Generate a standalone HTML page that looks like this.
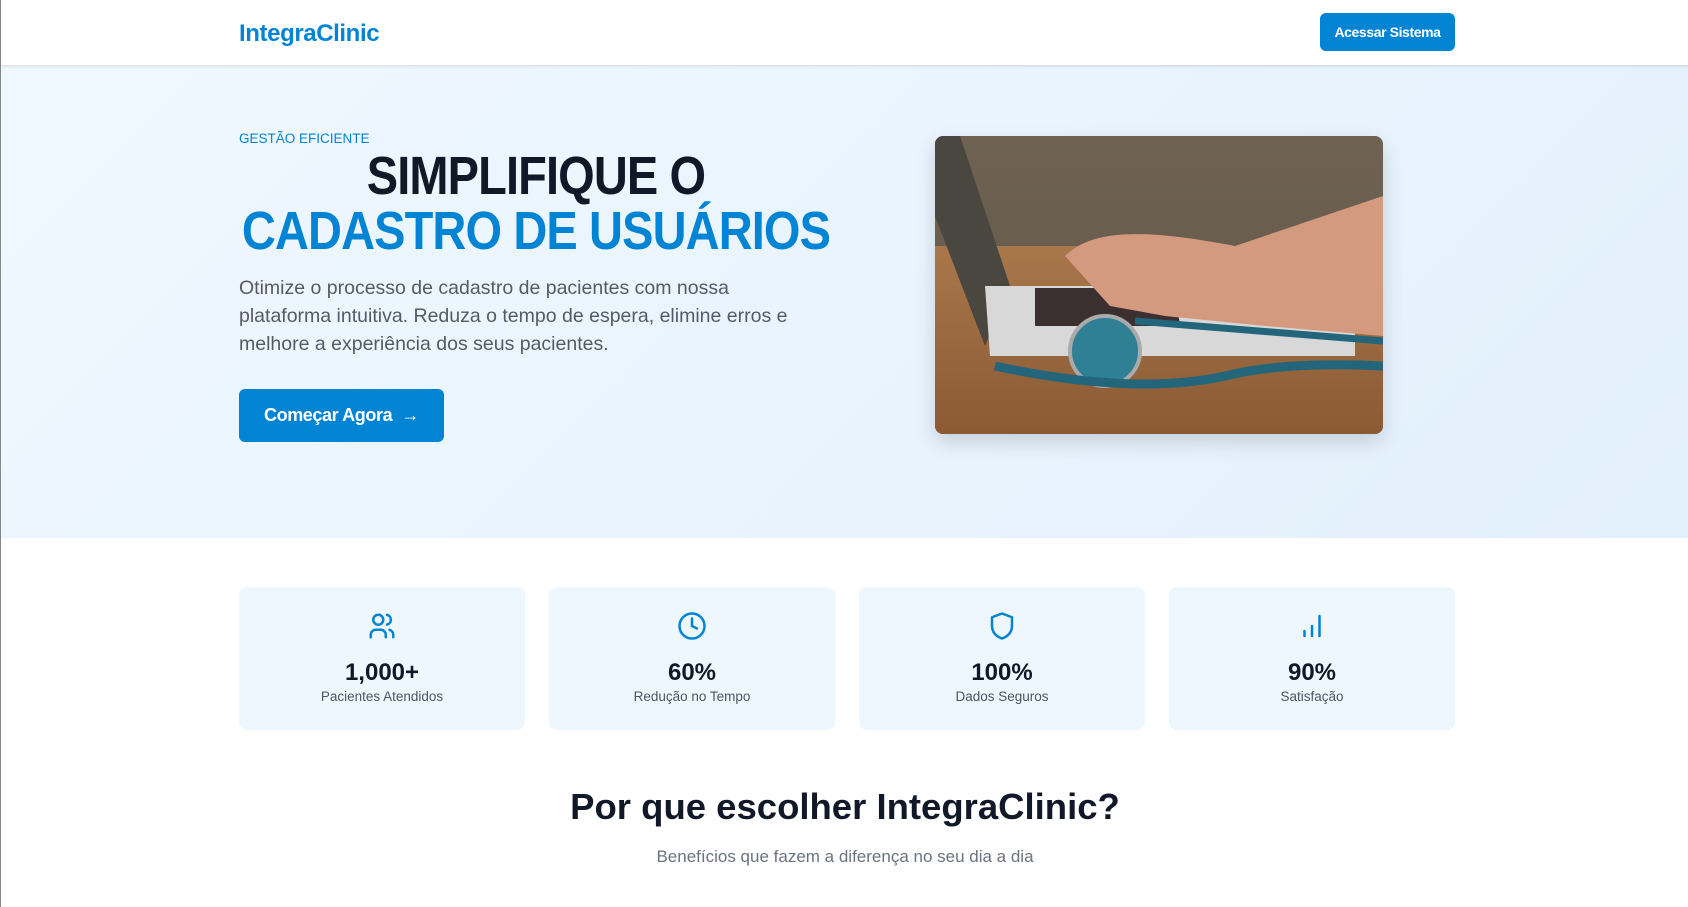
<!DOCTYPE html>
<html><head><meta charset="utf-8"><style>
*{margin:0;padding:0;box-sizing:border-box}
body{width:1688px;height:907px;overflow:hidden;font-family:"Liberation Sans",sans-serif;background:#fff;position:relative;border-left:1px solid #888}
.nav{position:absolute;left:0;top:0;width:1688px;height:65px;background:#fff;box-shadow:0 1px 3px rgba(0,0,0,.12);z-index:2}
.logo{position:absolute;left:238px;top:20px;font-size:24px;font-weight:700;color:#0284d4;letter-spacing:-.4px}
.btn1{position:absolute;left:1319px;top:13px;width:135px;height:38px;background:#0284d4;color:#fff;border-radius:6px;font-size:14px;font-weight:700;text-align:center;line-height:38px;letter-spacing:-.4px}
.hero{position:absolute;left:0;top:65px;width:1688px;height:473px;background:linear-gradient(135deg,#f0f8ff,#e2f0fc)}
.tag{position:absolute;left:238px;top:131px;font-size:13.5px;color:#0284d4}
.h1{position:absolute;left:135px;width:800px;text-align:center;font-weight:900;font-size:54px;line-height:56px;letter-spacing:-1px;white-space:nowrap;transform:scaleX(.87)}
.p{position:absolute;left:238px;top:274px;width:580px;font-size:19.5px;line-height:28px;color:#555b66}
.btn2{position:absolute;left:238px;top:389px;width:205px;height:53px;background:#0284d4;color:#fff;border-radius:6px;font-size:18px;font-weight:700;line-height:53px;padding-left:25px;letter-spacing:-.4px}
.img{position:absolute;left:934px;top:136px;width:448px;height:298px;border-radius:8px;overflow:hidden;box-shadow:0 8px 20px rgba(0,0,0,.15)}
.card{position:absolute;top:587px;width:286px;height:143px;background:#eff7fe;border-radius:8px;text-align:center}
.card svg{position:absolute;left:128px;top:24px}
.num{position:absolute;top:72px;width:100%;font-size:24px;font-weight:700;color:#111827}
.lbl{position:absolute;top:102px;width:100%;font-size:13.5px;color:#4b5563}
.h2{position:absolute;top:786px;width:1688px;text-align:center;font-size:36.5px;font-weight:800;color:#111827}
.sub{position:absolute;top:847px;width:1688px;text-align:center;font-size:17px;color:#6b7280}
</style></head><body>
<div class="nav"><div class="logo">IntegraClinic</div><div class="btn1">Acessar Sistema</div></div>
<div class="hero"></div>
<div class="tag">GESTÃO EFICIENTE</div>
<div class="h1" style="top:148px;color:#111827">SIMPLIFIQUE O</div>
<div class="h1" style="top:203px;color:#0284d4">CADASTRO DE USUÁRIOS</div>
<div class="p">Otimize o processo de cadastro de pacientes com nossa plataforma intuitiva. Reduza o tempo de espera, elimine erros e melhore a experiência dos seus pacientes.</div>
<div class="btn2">Começar Agora &nbsp;→</div>
<div class="img"><svg width="448" height="298" viewBox="0 0 448 298">
<defs><linearGradient id="w" x1="0" y1="0" x2="0" y2="1"><stop offset="0" stop-color="#6f6252"/><stop offset="1" stop-color="#5f5548"/></linearGradient>
<linearGradient id="t" x1="0" y1="0" x2="0" y2="1"><stop offset="0" stop-color="#a8774a"/><stop offset="1" stop-color="#8a5a35"/></linearGradient></defs>
<rect width="448" height="298" fill="url(#w)"/>
<rect x="0" y="110" width="448" height="188" fill="url(#t)"/>
<polygon points="0,0 25,0 75,150 50,210 0,80" fill="#4a4640"/>
<polygon points="50,150 420,150 420,220 55,220" fill="#d8d8d8"/>
<polygon points="100,152 240,152 245,190 100,190" fill="#3a3030"/>
<path d="M130,120 C160,90 220,95 300,110 L448,60 L448,200 L330,190 L230,180 L175,170 Z" fill="#d49a80"/>
<circle cx="170" cy="215" r="35" fill="#2f7f95" stroke="#aaa" stroke-width="4"/>
<path d="M60,230 Q200,260 290,240 Q350,225 448,230" stroke="#23657a" stroke-width="9" fill="none"/>
<path d="M200,185 Q330,195 448,205" stroke="#23657a" stroke-width="7" fill="none"/>
</svg></div>

<div class="card" style="left:238px"><svg width="30" height="30" viewBox="0 0 24 24" fill="none" stroke="#0284d4" stroke-width="2" stroke-linecap="round"><circle cx="9" cy="7" r="4"/><path d="M3 21v-2a4 4 0 0 1 4-4h4a4 4 0 0 1 4 4v2"/><path d="M16 3.1a4 4 0 0 1 0 7.8M21 21v-2a4 4 0 0 0-3-3.9"/></svg><div class="num">1,000+</div><div class="lbl">Pacientes Atendidos</div></div>
<div class="card" style="left:548px"><svg width="30" height="30" viewBox="0 0 24 24" fill="none" stroke="#0284d4" stroke-width="2" stroke-linecap="round"><circle cx="12" cy="12" r="10"/><path d="M12 6v6l4 2"/></svg><div class="num">60%</div><div class="lbl">Redução no Tempo</div></div>
<div class="card" style="left:858px"><svg width="30" height="30" viewBox="0 0 24 24" fill="none" stroke="#0284d4" stroke-width="2" stroke-linejoin="round"><path d="M12 2l8 3v7c0 5-3.5 8.5-8 10-4.5-1.5-8-5-8-10V5z"/></svg><div class="num">100%</div><div class="lbl">Dados Seguros</div></div>
<div class="card" style="left:1168px"><svg width="30" height="30" viewBox="0 0 24 24" fill="none" stroke="#0284d4" stroke-width="2" stroke-linecap="round"><path d="M6 20v-4M12 20v-8M18 20V4"/></svg><div class="num">90%</div><div class="lbl">Satisfação</div></div>

<div class="h2">Por que escolher IntegraClinic?</div>
<div class="sub">Benefícios que fazem a diferença no seu dia a dia</div>
</body></html>
